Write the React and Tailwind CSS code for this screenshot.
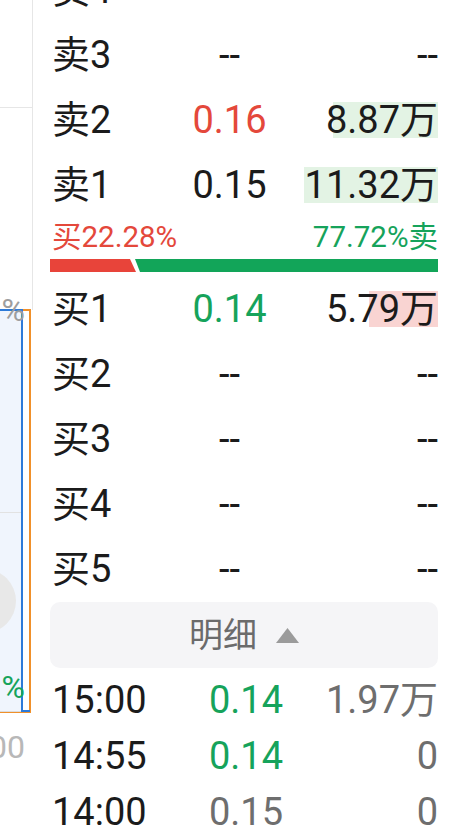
import React from 'react';

const FONT = { fontFamily: 'Roboto, "Noto Sans CJK SC", sans-serif' };

const ASKS = [
  { label: '卖4', price: '--', vol: '--' },
  { label: '卖3', price: '--', vol: '--' },
  { label: '卖2', price: '0.16', vol: '8.87万', tone: 'up', bar: 8.87 },
  { label: '卖1', price: '0.15', vol: '11.32万', bar: 11.32 },
];

const BIDS = [
  { label: '买1', price: '0.14', vol: '5.79万', tone: 'down', bar: 5.79, bid: true },
  { label: '买2', price: '--', vol: '--' },
  { label: '买3', price: '--', vol: '--' },
  { label: '买4', price: '--', vol: '--' },
  { label: '买5', price: '--', vol: '--' },
];

const TICKS = [
  { time: '15:00', price: '0.14', vol: '1.97万', tone: 'down' },
  { time: '14:55', price: '0.14', vol: '0', tone: 'down' },
  { time: '14:00', price: '0.15', vol: '0' },
];

const MAX_VOL = 11.32;
const MAX_BAR = 134;

const toneClass = (tone) =>
  tone === 'up' ? 'text-[#e4483b]' : tone === 'down' ? 'text-[#16a35b]' : 'text-[#1b1b1b]';

function QuoteRow({ row }) {
  return (
    <div className="flex items-center h-[65px] text-[38px] leading-none text-[#1b1b1b] whitespace-nowrap">
      <span className="w-[130px]">{row.label}</span>
      <span className={`w-[95px] text-center ${toneClass(row.tone)}`}>{row.price}</span>
      <span className="relative flex-1 text-right">
        {row.bar && (
          <span
            className={`absolute right-0 top-1/2 -translate-y-1/2 h-[36px] ${
              row.bid ? 'bg-[#f9d4d2]' : 'bg-[#e3f3e4]'
            }`}
            style={{ width: (row.bar / MAX_VOL) * MAX_BAR }}
          />
        )}
        <span className="relative">{row.vol}</span>
      </span>
    </div>
  );
}

function SideStrip() {
  return (
    <div className="relative w-[33px] h-full shrink-0 overflow-hidden">
      <div className="absolute right-0 top-0 w-[1.5px] h-[310px] bg-[#e6e6e6]" />
      <div className="absolute left-0 top-[107px] w-[32px] h-px bg-[#e6e6e6]" />
      <div className="absolute -left-[10px] top-[309px] w-[41px] h-[404px] border-2 border-[#f0902a]" />
      <div className="absolute -left-[10px] top-[309px] w-[33px] h-[403px] border-2 border-b-0 border-[#2d7ad8] bg-[#f0f5fd]" />
      <div className="absolute left-[21px] top-[710px] w-[9px] h-[2px] bg-[#2d7ad8]" />
      <div className="absolute left-0 top-[711px] w-[21px] h-px bg-[#dcdcdc]" />
      <div className="absolute left-0 top-[512px] w-[21px] h-px bg-[#e2e2e2]" />
      <div className="absolute -left-[48px] top-[569px] w-[64px] h-[64px] rounded-full bg-[#e8e8e8]" />
      <span className="absolute right-[8px] top-[294px] text-[32px] leading-none text-[#9e9e9e]">%</span>
      <span className="absolute right-[8px] top-[671px] text-[32px] leading-none text-[#16a35b]">%</span>
      <span className="absolute right-[8px] top-[731px] text-[32px] leading-none text-[#b8b8b8]">00</span>
    </div>
  );
}

export default function App() {
  return (
    <div className="w-[452px] h-[835px] overflow-hidden bg-white flex" style={FONT}>
      <SideStrip />

      <div className="flex-1 pl-[19px] pr-[14px]">
        <div className="-mt-[43px]">
          {ASKS.map((row) => (
            <QuoteRow key={row.label} row={row} />
          ))}
        </div>

        <div className="flex items-center justify-between h-[42px] text-[29.5px] leading-none whitespace-nowrap">
          <span className="text-[#e4483b]">买22.28%</span>
          <span className="text-[#16a35b]">77.72%卖</span>
        </div>

        <svg className="block -ml-[2px] w-[388px] h-[13px]" viewBox="0 0 388 13" preserveAspectRatio="none">
          <polygon points="0,0 80,0 86,13 0,13" fill="#e8443a" />
          <polygon points="85,0 388,0 388,13 90,13" fill="#12a559" />
        </svg>

        <div className="mt-[4px]">
          {BIDS.map((row) => (
            <QuoteRow key={row.label} row={row} />
          ))}
        </div>

        <button className="-ml-[2px] w-[388px] h-[66px] mt-px rounded-[10px] bg-[#f5f5f7] flex items-center justify-center gap-[19px]">
          <span className="text-[34px] leading-none text-[#6b6b6b]">明细</span>
          <svg width="23" height="15" viewBox="0 0 23 15">
            <polygon points="11.5,0 23,15 0,15" fill="#9b9b9b" />
          </svg>
        </button>

        <div className="mt-[4px]">
          {TICKS.map((t) => (
            <div key={t.time} className="flex items-center h-[56px] text-[38px] leading-none whitespace-nowrap">
              <span className="w-[140px] text-[#1b1b1b]">{t.time}</span>
              <span className={`w-[91px] text-right ${t.tone ? toneClass(t.tone) : 'text-[#6e6e6e]'}`}>
                {t.price}
              </span>
              <span className="flex-1 text-right text-[#6e6e6e]">{t.vol}</span>
            </div>
          ))}
        </div>
      </div>
    </div>
  );
}
